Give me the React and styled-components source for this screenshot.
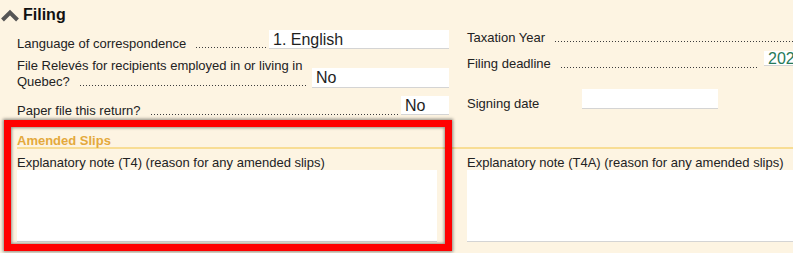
import React from 'react';
import styled, { createGlobalStyle } from 'styled-components';

const GlobalStyle = createGlobalStyle`
  html, body {
    margin: 0;
    padding: 0;
    overflow: hidden;
    background-color: #fdf4e2;
  }
  body {
    font-family: 'Liberation Sans', Arial, sans-serif;
    color: #222;
  }
`;

const StyledPage = styled.div`
  position: relative;
  width: 880px;
  height: 253px;
  background-color: #fdf4e2;
`;

const StyledHeader = styled.h2`
  display: flex;
  align-items: center;
  gap: 3px;
  margin: 0;
  padding: 6px 0 0 0;
  font-size: 16px;
  line-height: 18px;
  font-weight: 700;
  color: #111;
`;

const StyledColumns = styled.div`
  display: grid;
  grid-template-columns: 432px 413px;
  column-gap: 18px;
  padding-left: 17px;
  align-items: start;
`;

const StyledColumn = styled.div`
  display: flex;
  flex-direction: column;
`;

const StyledRow = styled.div`
  display: flex;
  align-items: flex-end;
  margin-top: ${(p) => p.$mt}px;
`;

const StyledLabelCell = styled.div`
  flex: 1;
  min-width: 0;
  display: flex;
  flex-direction: column;
`;

const StyledLine = styled.div`
  display: flex;
  align-items: flex-end;
  font-size: 13px;
  line-height: 16px;
  white-space: nowrap;
  ${(p) => p.$width && `width: ${p.$width}px; flex: none;`}
`;

const StyledLeader = styled.span`
  flex: 1;
  height: 1px;
  margin: 0 0 4px 10px;
  background: repeating-linear-gradient(90deg, #3c3c3c 0 1px, transparent 1px 3px);
`;

const StyledInput = styled.div`
  flex: none;
  box-sizing: border-box;
  width: ${(p) => p.$w}px;
  height: ${(p) => p.$h}px;
  margin: 0 0 ${(p) => p.$lift || 0}px ${(p) => p.$gap || 0}px;
  padding-left: 4px;
  background: #fff;
  border-bottom: 1px solid #d4d4d4;
  font-size: 16px;
  line-height: ${(p) => p.$h}px;
  color: ${(p) => (p.$accent ? '#277a59' : '#1e1e1e')};
  white-space: nowrap;
  overflow: hidden;
`;

const StyledSection = styled.section`
  margin-top: 15px;
`;

const StyledSectionTitle = styled.h3`
  margin: 0 0 0 17px;
  font-size: 13px;
  line-height: 13px;
  font-weight: 700;
  color: #e4a93c;
  border-bottom: 2px solid #f8dd94;
`;

const StyledNotes = styled(StyledColumns)`
  margin-top: 7px;
`;

const StyledNoteLabel = styled.div`
  font-size: 13px;
  line-height: 14px;
  white-space: nowrap;
`;

const StyledTextArea = styled.div`
  box-sizing: border-box;
  width: ${(p) => p.$w}px;
  height: 72px;
  background: #fff;
  border-bottom: 1px solid #d4d4d4;
`;

const StyledHighlight = styled.div`
  position: absolute;
  top: 120px;
  left: 4px;
  width: 448px;
  height: 131px;
  box-sizing: border-box;
  border: 7px solid #ff0000;
  box-shadow: 0 0 3px 1px rgba(0, 0, 0, 0.45), inset 0 0 3px 1px rgba(0, 0, 0, 0.4);
  pointer-events: none;
`;

const Chevron = () => (
  <svg width="20" height="14" viewBox="0 0 20 14">
    <polyline
      points="2.5,12 10,4.5 17.5,12"
      fill="none"
      stroke="#555"
      strokeWidth="4"
    />
  </svg>
);

const App = () => (
  <StyledPage>
    <GlobalStyle />
    <StyledHeader>
      <Chevron />
      Filing
    </StyledHeader>

    <StyledColumns>
      <StyledColumn>
        <StyledRow $mt={6}>
          <StyledLabelCell>
            <StyledLine>
              Language of correspondence
              <StyledLeader />
            </StyledLine>
          </StyledLabelCell>
          <StyledInput $w={180} $h={19} $lift={3} $gap={1}>
            1. English
          </StyledInput>
        </StyledRow>

        <StyledRow $mt={6}>
          <StyledLabelCell>
            <StyledLine>File Relevés for recipients employed in or living in</StyledLine>
            <StyledLine>
              Quebec?
              <StyledLeader />
            </StyledLine>
          </StyledLabelCell>
          <StyledInput $w={137} $h={20} $lift={2} $gap={4}>
            No
          </StyledInput>
        </StyledRow>

        <StyledRow $mt={6}>
          <StyledLabelCell>
            <StyledLine>
              Paper file this return?
              <StyledLeader />
            </StyledLine>
          </StyledLabelCell>
          <StyledInput $w={48} $h={19} $lift={4} $gap={1}>
            No
          </StyledInput>
        </StyledRow>
      </StyledColumn>

      <StyledColumn>
        <StyledRow $mt={6}>
          <StyledLabelCell>
            <StyledLine>
              Taxation Year
              <StyledLeader />
            </StyledLine>
          </StyledLabelCell>
          <StyledInput $w={70} $h={16} $gap={6} />
        </StyledRow>

        <StyledRow $mt={5}>
          <StyledLabelCell>
            <StyledLine>
              Filing deadline
              <StyledLeader />
            </StyledLine>
          </StyledLabelCell>
          <StyledInput $w={116} $h={15} $lift={6} $gap={6} $accent>
            2025-02-28
          </StyledInput>
        </StyledRow>

        <StyledRow $mt={17}>
          <StyledLine $width={115}>Signing date</StyledLine>
          <StyledInput $w={136} $h={20} $lift={3} />
        </StyledRow>
      </StyledColumn>
    </StyledColumns>

    <StyledSection>
      <StyledSectionTitle>Amended Slips</StyledSectionTitle>
      <StyledNotes>
        <div>
          <StyledNoteLabel>Explanatory note (T4) (reason for any amended slips)</StyledNoteLabel>
          <StyledTextArea $w={420} />
        </div>
        <div>
          <StyledNoteLabel>Explanatory note (T4A) (reason for any amended slips)</StyledNoteLabel>
          <StyledTextArea $w={413} />
        </div>
      </StyledNotes>
    </StyledSection>

    <StyledHighlight />
  </StyledPage>
);

export default App;
